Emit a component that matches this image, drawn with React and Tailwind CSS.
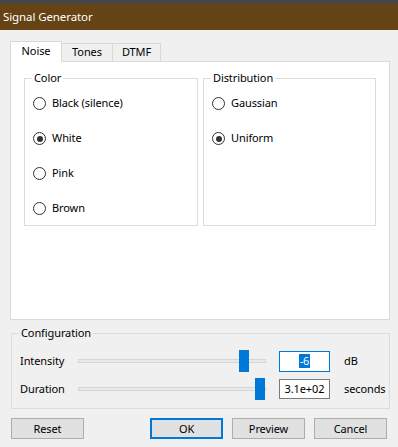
import { useState } from "react";

const font = { fontFamily: '"Noto Sans", "Open Sans", sans-serif' };

const Radio = ({ label, checked, onSelect }) => (
  <div className="flex h-[35px] items-center cursor-default" onClick={onSelect}>
    <span className="flex h-[13px] w-[13px] items-center justify-center rounded-full border border-[#333] bg-white">
      {checked && <span className="h-[6px] w-[6px] rounded-full bg-[#333]" />}
    </span>
    <span className="ml-[6px]">{label}</span>
  </div>
);

const Group = ({ title, className, bg = "bg-white", children }) => (
  <div className={`relative border border-[#dcdcdc] ${className}`}>
    <span className={`absolute -top-[9px] left-[7px] px-[2px] leading-[16px] ${bg}`}>{title}</span>
    {children}
  </div>
);

const Slider = ({ pos }) => (
  <div className="relative h-[22px] w-[188px]">
    <div className="absolute left-0 right-0 top-[9px] h-[4px] border border-[#d6d6d6] bg-[#e7eaea]" />
    <div className="absolute top-0 h-[22px] w-[10px] bg-[#0078d7]" style={{ left: pos }} />
  </div>
);

const Button = ({ children, primary }) => (
  <button
    className={`h-[21px] w-[73px] bg-[#e1e1e1] text-[11px] leading-none tracking-[-0.1px] ${
      primary ? "border-2 border-[#0078d7]" : "border border-[#adadad]"
    }`}
  >
    {children}
  </button>
);

export default function App() {
  const [color, setColor] = useState("White");
  const [dist, setDist] = useState("Uniform");

  return (
    <div
      className="h-[447px] w-[398px] overflow-hidden bg-[#f0f0f0] text-[11px] tracking-[-0.1px] text-black"
      style={font}
    >
      <div className="flex h-[30px] items-center border-t-[4px] border-[#464646] bg-[#654314] pl-[3px] text-[11.5px] text-white">
        Signal Generator
      </div>

      <div className="px-[10px] pt-[11px]">
        {/* tabs */}
        <div className="relative z-10 -mb-px flex h-[21px] items-end">
          <div className="flex h-[21px] w-[52px] items-center justify-center border border-b-0 border-[#d9d9d9] bg-white pb-[1px]">
            Noise
          </div>
          <div className="-ml-px flex h-[19px] w-[52px] items-center justify-center border border-[#d9d9d9] bg-[#f0f0f0]">
            Tones
          </div>
          <div className="-ml-px flex h-[19px] w-[49px] items-center justify-center border border-[#d9d9d9] bg-[#f0f0f0]">
            DTMF
          </div>
        </div>

        <div className="h-[259px] w-[380px] border border-[#d9d9d9] bg-white pl-[13px] pt-[16px]">
          <div className="flex gap-[5px]">
            <Group title="Color" className="h-[148px] w-[174px] pl-[8px] pt-[7px]">
              {["Black (silence)", "White", "Pink", "Brown"].map((c) => (
                <Radio key={c} label={c} checked={color === c} onSelect={() => setColor(c)} />
              ))}
            </Group>
            <Group title="Distribution" className="h-[148px] w-[173px] pl-[8px] pt-[7px]">
              {["Gaussian", "Uniform"].map((d) => (
                <Radio key={d} label={d} checked={dist === d} onSelect={() => setDist(d)} />
              ))}
            </Group>
          </div>
        </div>
      </div>

      <div className="px-[11px] pt-[13px]">
        <Group title="Configuration" bg="bg-[#f0f0f0]" className="h-[76px] w-[379px] pl-[8px] pt-[16px]">
          <div className="flex h-[22px] items-center">
            <span className="w-[58px]">Intensity</span>
            <Slider pos={161} />
            <div className="ml-[13px] flex h-[21px] w-[51px] items-center justify-center border border-[#0078d7] bg-white">
              <span className="bg-[#0078d7] px-[1px] leading-[14px] text-white">-6</span>
            </div>
            <span className="ml-[14px]">dB</span>
          </div>
          <div className="mt-[6px] flex h-[22px] items-center">
            <span className="w-[58px]">Duration</span>
            <Slider pos={177} />
            <div className="ml-[13px] flex h-[20px] w-[51px] items-center justify-center border border-[#7a7a7a] bg-white">
              3.1e+02
            </div>
            <span className="ml-[14px]">seconds</span>
          </div>
        </Group>

        <div className="mt-[9px] flex">
          <Button>Reset</Button>
          <div className="ml-auto flex gap-[9px]">
            <Button primary>OK</Button>
            <Button>Preview</Button>
            <Button>Cancel</Button>
          </div>
        </div>
      </div>
    </div>
  );
}
